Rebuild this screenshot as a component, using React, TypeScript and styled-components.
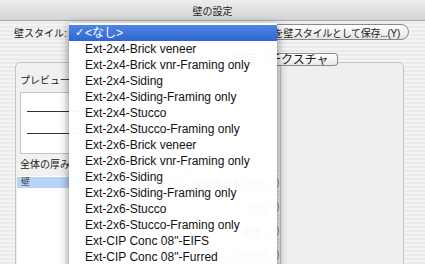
import React from "react";
import styled, { createGlobalStyle } from "styled-components";

const Global = createGlobalStyle`
  html, body { margin: 0; padding: 0; }
  body {
    width: 425px; height: 264px; overflow: hidden;
    font-family: "Liberation Sans", "Noto Sans CJK JP", sans-serif;
  }
`;

const Window = styled.div`
  position: relative;
  width: 425px;
  height: 264px;
  overflow: hidden;
  display: flex;
  flex-direction: column;
  background: repeating-linear-gradient(to bottom, #f3f3f3 0 2px, #ebebeb 2px 4px);
`;

const TitleBar = styled.div`
  height: 20px;
  flex: none;
  display: flex;
  align-items: center;
  justify-content: center;
  background: linear-gradient(#ededed, #d4d4d4);
  border-bottom: 1px solid #a6a6a6;
  font-size: 10px;
  color: #1e1e1e;
`;

const Body = styled.div`
  flex: 1;
  display: flex;
  flex-direction: column;
  padding: 3px 16px 0 14px;
`;

const StyleRow = styled.div`
  display: flex;
  align-items: center;
  height: 16px;
`;

const Label = styled.span`
  font-size: 10px;
  color: #1a1a1a;
  white-space: nowrap;
`;

const Popup = styled.div`
  margin-left: 4px;
  width: 186px;
  height: 14px;
  border: 1px solid #8d8d8d;
  border-radius: 4px;
  background: linear-gradient(#ffffff, #e6e6e6);
`;

const PillButton = styled.div<{ $push?: boolean }>`
  margin-left: ${(p) => (p.$push ? "auto" : "0")};
  height: 14px;
  padding: 0 8px 0 14px;
  display: flex;
  align-items: center;
  border: 1px solid #8a8a8a;
  border-radius: 8px;
  background: linear-gradient(#ffffff, #e4e4e4);
  font-size: 10px;
  letter-spacing: ${(p) => (p.$push ? "-0.3px" : "0")};
  color: #1a1a1a;
  white-space: nowrap;
`;

const Panels = styled.div`
  flex: 1;
  display: grid;
  grid-template-columns: 176px minmax(0, 1fr) 124px;
  column-gap: 4px;
  margin: 13px 5px 0 1px;
  align-items: start;
`;

const GroupBox = styled.div`
  margin-top: 9px;
  height: 240px;
  border: 1px solid #c2c2c2;
  border-radius: 5px;
  background: #f1f1f1;
  padding: 11px 4px 0 4px;
  display: flex;
  flex-direction: column;
`;

const BoxLabel = styled.div`
  font-size: 10px;
  line-height: 14px;
  color: #1a1a1a;
  margin-bottom: 4px;
`;

const Preview = styled.div`
  height: 62px;
  background: #ffffff;
  border: 1px solid #c4c4c4;
  display: flex;
  flex-direction: column;
  gap: 21px;
  padding: 18px 12px 0 6px;
  box-sizing: border-box;
  margin-bottom: 4px;
`;

const PreviewLine = styled.div`
  height: 1px;
  background: #333333;
`;

const List = styled.div`
  flex: 1;
  margin-left: -3px;
  background: #ffffff;
  padding-top: 1px;
`;

const ListRow = styled.div<{ $selected?: boolean }>`
  height: 11px;
  line-height: 11px;
  padding-left: 4px;
  font-size: 9px;
  color: #333;
  background: ${(p) => (p.$selected ? "#b8d3f6" : "transparent")};
`;

const ButtonColumn = styled.div`
  display: flex;
  flex-direction: column;
  align-items: flex-end;
  gap: 8px;
  padding-top: 122px;
  margin-right: -3px;
`;

const RightColumn = styled.div`
  display: flex;
  flex-direction: column;
`;

const TabBar = styled.div`
  display: flex;
  height: 13px;
  margin-left: -51px;
  position: relative;
  z-index: 1;
`;

const Tab = styled.div<{ $first?: boolean; $last?: boolean }>`
  height: 13px;
  box-sizing: border-box;
  padding: 0 8px 0 3px;
  display: flex;
  align-items: center;
  font-size: 12px;
  line-height: 1;
  color: #1a1a1a;
  border: 1px solid #8c8c8c;
  border-left: ${(p) => (p.$first ? "1px solid #8c8c8c" : "none")};
  border-radius: ${(p) => (p.$first ? "4px 0 0 4px" : p.$last ? "0 4px 4px 0" : "0")};
  background: linear-gradient(#ffffff, #e9e9e9);
  white-space: nowrap;
`;

const TabBox = styled.div`
  margin-top: -4px;
  height: 240px;
  border: 1px solid #c2c2c2;
  border-radius: 5px;
  background: linear-gradient(to right, #e9e9e9, #efefef 8px, #efefef);
`;

const Menu = styled.div`
  position: absolute;
  left: 69px;
  top: 23px;
  width: 208px;
  bottom: -20px;
  padding-top: 2px;
  background: rgba(255, 255, 255, 0.97);
  box-shadow: 0 3px 9px rgba(0, 0, 0, 0.5);
  z-index: 10;
`;

const MenuItem = styled.div<{ $selected?: boolean }>`
  position: relative;
  height: 16px;
  line-height: 16px;
  padding-left: 16px;
  font-size: 12px;
  white-space: nowrap;
  color: ${(p) => (p.$selected ? "#ffffff" : "#111111")};
  background: ${(p) => (p.$selected ? "linear-gradient(#4f86e3, #2f65d2)" : "transparent")};
`;

const Check = styled.span`
  position: absolute;
  left: 6px;
  top: 0;
  font-size: 11px;
  font-family: "DejaVu Sans", sans-serif;
`;

const items = [
  "<なし>",
  "Ext-2x4-Brick veneer",
  "Ext-2x4-Brick vnr-Framing only",
  "Ext-2x4-Siding",
  "Ext-2x4-Siding-Framing only",
  "Ext-2x4-Stucco",
  "Ext-2x4-Stucco-Framing only",
  "Ext-2x6-Brick veneer",
  "Ext-2x6-Brick vnr-Framing only",
  "Ext-2x6-Siding",
  "Ext-2x6-Siding-Framing only",
  "Ext-2x6-Stucco",
  "Ext-2x6-Stucco-Framing only",
  'Ext-CIP Conc 08"-EIFS',
  'Ext-CIP Conc 08"-Furred',
];

export default function App() {
  return (
    <>
      <Global />
      <Window>
        <TitleBar>壁の設定</TitleBar>
        <Body>
          <StyleRow>
            <Label>壁スタイル:</Label>
            <Popup />
            <PillButton $push>を壁スタイルとして保存...(Y)</PillButton>
          </StyleRow>
          <Panels>
            <GroupBox>
              <BoxLabel>プレビュー:</BoxLabel>
              <Preview>
                <PreviewLine />
                <PreviewLine />
              </Preview>
              <BoxLabel>全体の厚み:</BoxLabel>
              <List>
                <ListRow $selected>壁</ListRow>
              </List>
            </GroupBox>
            <ButtonColumn>
              <PillButton>構成要素を追加...</PillButton>
              <PillButton>削除</PillButton>
              <PillButton>編集...</PillButton>
              <PillButton>入れ替え</PillButton>
            </ButtonColumn>
            <RightColumn>
              <TabBar>
                <Tab $first>定義</Tab>
                <Tab $last>テクスチャ</Tab>
              </TabBar>
              <TabBox />
            </RightColumn>
          </Panels>
        </Body>
        <Menu>
          {items.map((t, i) => (
            <MenuItem key={t} $selected={i === 0}>
              {i === 0 && <Check>✓</Check>}
              {t}
            </MenuItem>
          ))}
        </Menu>
      </Window>
    </>
  );
}
